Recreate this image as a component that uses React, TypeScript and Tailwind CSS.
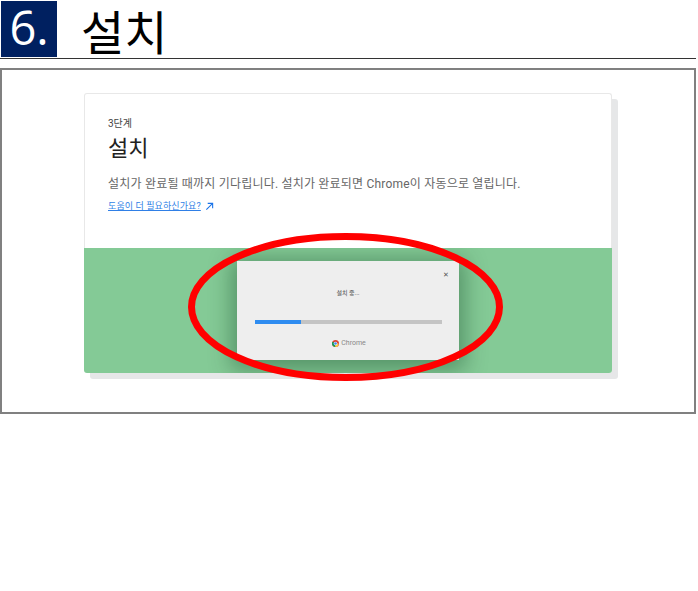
const sans = "font-['Roboto','Noto_Sans_CJK_KR',sans-serif]";

function ChromeLogo() {
  return (
    <svg viewBox="0 0 24 24" className="h-[7px] w-[7px]" aria-hidden="true">
      <circle cx="12" cy="12" r="12" fill="#db4437" />
      <path d="M12 12 1.6 6A12 12 0 0 0 12 24l5-9z" fill="#0f9d58" />
      <path d="M12 12h10.4A12 12 0 0 1 12 24l-2-9z" fill="#ffcd40" />
      <circle cx="12" cy="12" r="6" fill="#fff" />
      <circle cx="12" cy="12" r="4.5" fill="#4285f4" />
    </svg>
  );
}

function InstallDialog() {
  return (
    <div className="absolute left-[153px] top-[13px] flex h-[99px] w-[222px] flex-col bg-[#eeeeee] shadow-[0_4px_20px_6px_rgba(0,50,20,0.35)]">
      <span className="absolute right-[10px] top-[9px] text-[7px] leading-[10px] text-[#555]">✕</span>
      <p className={`${sans} mt-[27px] text-center text-[6px] leading-[10px] font-medium text-[#666]`}>
        설치 중...
      </p>
      <div className="ml-[18px] mr-[17px] mt-[22px] h-1 bg-[#c4c4c4]">
        <div className="h-full w-[46px] bg-[#2e8cf0]" />
      </div>
      <div className="ml-[2px] mt-[14px] flex items-center justify-center gap-[2px]">
        <ChromeLogo />
        <span className={`${sans} text-[7px] leading-[10px] text-[#888]`}>Chrome</span>
      </div>
    </div>
  );
}

export default function App() {
  return (
    <div className="h-[591px] w-[698px] bg-white">
      <header className="flex h-[59px] w-[696px] items-start border-b border-[#333] pt-px">
        <div className="ml-px flex h-[56px] w-[56px] items-center justify-center bg-[#002060] pb-[3px] font-['Open_Sans',sans-serif] text-[47px] leading-none text-white">
          6.
        </div>
        <h1 className="ml-[24px] font-['Noto_Sans_CJK_KR',sans-serif] text-[47px] leading-[57px] text-black">
          설치
        </h1>
      </header>

      <section className="relative mt-[9px] h-[346px] w-[696px] border-2 border-[#808080] pl-[82px] pt-[23px]">
        <div className="h-[280px] w-[528px] rounded-[3px] shadow-[6px_6px_0_0_#e6e7e8]">
          <div className="h-[155px] rounded-t-[3px] border border-b-0 border-[#e8e8e8] bg-white pl-[23px] pt-[23px]">
            <p className={`${sans} text-[10px] leading-[14px] text-[#444]`}>3단계</p>
            <h2 className={`${sans} mt-[3px] text-[22px] leading-[30px] text-[#222]`}>설치</h2>
            <p className={`${sans} mt-[11px] text-[12px] leading-[18px] tracking-[0.2px] text-[#666]`}>
              설치가 완료될 때까지 기다립니다. 설치가 완료되면 Chrome이 자동으로 열립니다.
            </p>
            <p className="mt-[7px] flex items-center gap-[4px]">
              <a className={`${sans} text-[9px] leading-[13px] tracking-[0.1px] text-[#2f7fe6] underline`}>
                도움이 더 필요하신가요?
              </a>
              <svg viewBox="0 0 10 10" className="h-[9px] w-[9px]" fill="none" stroke="#1a73e8" strokeWidth="1.2" aria-hidden="true">
                <path d="M1.5 8.5 8.5 1.5M3 1.5h5.500V7" />
              </svg>
            </p>
          </div>
          <div className="relative h-[125px] overflow-hidden rounded-b-[3px] bg-[#84ca96]">
            <InstallDialog />
          </div>
        </div>

        <svg className="absolute left-[186px] top-[162px] h-[150px] w-[317px]" viewBox="0 0 317 150" fill="none" aria-hidden="true">
          <ellipse cx="157.500" cy="75" rx="154" ry="70.500" stroke="#ff0000" strokeWidth="7" />
        </svg>
      </section>
    </div>
  );
}
